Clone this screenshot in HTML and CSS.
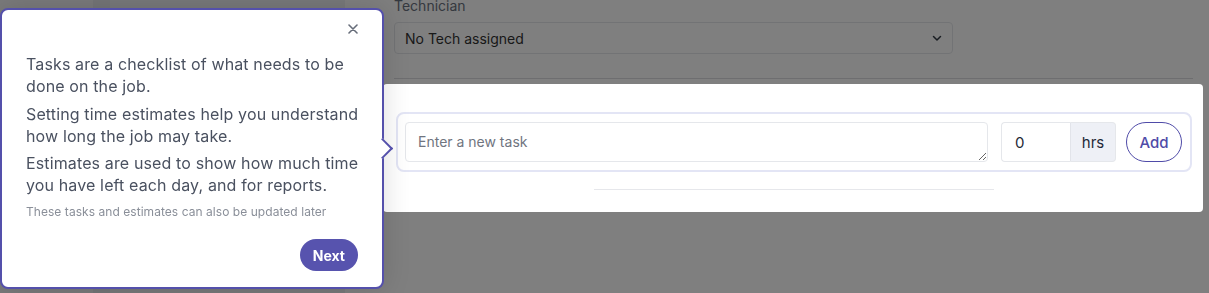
FILE: index.html
```html
<!DOCTYPE html>
<html lang="en">
<head>
  <meta charset="UTF-8" />
  <meta name="viewport" content="width=device-width, initial-scale=1" />
  <title>Job - Tasks</title>
  <link rel="stylesheet" href="styles.css">
</head>
<body>
  <div class="app">
    <aside class="side">
      <div class="side-nav"></div>
      <div class="side-rail"></div>
      <div class="side-panel"></div>
    </aside>

    <main class="main">
      <div class="field">
        <label class="field-label">Technician</label>
        <div class="select">
          <span>No Tech assigned</span>
          <svg class="chevron" width="12" height="12" viewBox="0 0 12 12"><path d="M2.5 4.5 6 8l3.5-3.5" fill="none" stroke="currentColor" stroke-width="1.5" stroke-linecap="round" stroke-linejoin="round"/></svg>
        </div>
      </div>
      <hr class="divider" />

      <!-- highlighted step of the tour -->
      <section class="task-card">
        <div class="task-row">
          <textarea class="task-input" placeholder="Enter a new task"></textarea>
          <div class="hours">
            <input class="hours-input" type="text" value="0" />
            <span class="hours-unit">hrs</span>
          </div>
          <button class="add-btn">Add</button>
        </div>
        <div class="task-rule"></div>
      </section>
    </main>
  </div>

  <div class="overlay"></div>

  <div class="popover">
    <div class="popover-head">
      <button class="close-btn" title="Close">
        <svg width="10" height="10" viewBox="0 0 10 10"><path d="M1 1l8 8M9 1 1 9" stroke="currentColor" stroke-width="1.6" stroke-linecap="round"/></svg>
      </button>
    </div>
    <p class="popover-text">Tasks are a checklist of what needs to be done on the job.</p>
    <p class="popover-text">Setting time estimates help you understand how long the job may take.</p>
    <p class="popover-text">Estimates are used to show how much time you have left each day, and for reports.</p>
    <p class="popover-note">These tasks and estimates can also be updated later</p>
    <div class="popover-foot">
      <button class="next-btn">Next</button>
    </div>
    <span class="popover-arrow"></span>
  </div>
</body>
</html>
```

FILE: styles.css
```css
body {
  margin: 0;
  background-color: #ffffff;
  font-family: 'Inter', 'Noto Sans', sans-serif;
  color: #1f2937;
  overflow: hidden;
}

.app {
  display: grid;
  grid-template-columns: 345px 38px 820px 1fr;
  height: 100vh;
}

/* Left side, mostly under the popover */
.side {
  display: grid;
  grid-template-columns: 93px 17px 1fr;
  background-color: #f4f5f7;
}
.side-nav {
  background-color: #f4f5f7;
}
.side-rail {
  background-color: #e9eaee;
}
.side-panel {
  background-color: #f1f2f4;
}

.main {
  grid-column: 3;
  margin-top: -4px;
}

.field {
  margin: 0 11px;
}
.field-label {
  display: block;
  font-size: 14px;
  line-height: 20px;
  color: #6b7280;
  margin-bottom: 6px;
}
.select {
  width: 559px;
  height: 32px;
  box-sizing: border-box;
  border: 1px solid #e5e7eb;
  border-radius: 4px;
  padding: 0 10px 0 10px;
  display: flex;
  align-items: center;
  justify-content: space-between;
  font-size: 14px;
  color: #333333;
}
.chevron {
  color: #333a44;
  margin-right: -1px;
}

.divider {
  border: none;
  border-top: 1px solid #dcdde0;
  margin: 24px 10px 5px 11px;
}

/* Task card, raised over the overlay */
.task-card {
  position: relative;
  z-index: 2;
  background-color: #ffffff;
  border-radius: 4px;
  padding: 28px 11px 0 13px;
  height: 128px;
  box-sizing: border-box;
}
.task-row {
  display: flex;
  align-items: center;
  border: 2px solid #e3e5f5;
  border-radius: 8px;
  padding: 8px 8px 8px 7px;
}
.task-input {
  flex-grow: 1;
  height: 40px;
  box-sizing: border-box;
  border: 1px solid #e5e7eb;
  border-radius: 4px;
  padding: 10px 12px;
  font-family: 'Inter', 'Noto Sans', sans-serif;
  font-size: 14px;
  line-height: 18px;
  color: #1f2937;
  resize: vertical;
  outline: none;
}
.task-input::placeholder {
  color: #70757f;
}
.hours {
  display: flex;
  margin-left: 13px;
  height: 40px;
}
.hours-input {
  width: 69px;
  box-sizing: border-box;
  border: 1px solid #e5e7eb;
  border-right: none;
  border-radius: 4px 0 0 4px;
  padding: 0 13px;
  font-family: 'Inter', 'Noto Sans', sans-serif;
  font-size: 15px;
  color: #1f2937;
  outline: none;
}
.hours-unit {
  width: 46px;
  display: flex;
  align-items: center;
  justify-content: center;
  background-color: #eef0f6;
  border: 1px solid #e5e7eb;
  border-left: 1px solid #e2e4ea;
  border-radius: 0 4px 4px 0;
  box-sizing: border-box;
  font-size: 15px;
  color: #1f2937;
}
.add-btn {
  margin-left: 10px;
  width: 56px;
  height: 40px;
  border: 1px solid #4f4ba8;
  border-radius: 20px;
  background-color: #ffffff;
  color: #4f4ba8;
  font-family: 'Inter', 'Noto Sans', sans-serif;
  font-size: 15px;
  font-weight: 500;
  cursor: pointer;
  padding: 0;
}
.task-rule {
  width: 400px;
  height: 1px;
  margin: 17px auto 0;
  background-color: #e6e7eb;
}

.overlay {
  position: fixed;
  inset: 0;
  z-index: 1;
  background-color: rgba(0, 0, 0, 0.5);
}

/* Tour popover */
.popover {
  position: absolute;
  left: 0;
  top: 8px;
  z-index: 3;
  width: 384px;
  height: 281px;
  box-sizing: border-box;
  background-color: #ffffff;
  border: 2px solid #5450ab;
  border-radius: 8px;
  padding: 8px 24px 0 24px;
  box-shadow: 0 0 28px rgba(0, 0, 0, 0.14);
}
.popover-head {
  display: flex;
  justify-content: flex-end;
  height: 22px;
  margin-bottom: 13px;
}
.close-btn {
  background: none;
  border: none;
  padding: 0;
  width: 22px;
  height: 22px;
  display: flex;
  align-items: center;
  justify-content: center;
  color: #676d7a;
  cursor: pointer;
  margin-right: -6px;
}
.popover-text {
  margin: 0 -8px 5.5px 0;
  font-size: 16px;
  line-height: 22px;
  color: #4a5160;
  letter-spacing: 0.13px;
}
.popover-note {
  margin: 8px 0 0;
  font-size: 12px;
  line-height: 16px;
  color: #8a8f99;
  letter-spacing: 0.05px;
}
.popover-foot {
  display: flex;
  justify-content: flex-end;
  margin-top: 19px;
}
.next-btn {
  height: 32px;
  padding: 0 13px;
  border: none;
  border-radius: 16px;
  background-color: #5753ae;
  color: #ffffff;
  font-family: 'Inter', 'Noto Sans', sans-serif;
  font-size: 14px;
  font-weight: 700;
  cursor: pointer;
}
.popover-arrow {
  position: absolute;
  right: -8px;
  top: 131px;
  width: 13px;
  height: 13px;
  background-color: #ffffff;
  border-top: 2px solid #5450ab;
  border-right: 2px solid #5450ab;
  transform: rotate(45deg);
}
```
